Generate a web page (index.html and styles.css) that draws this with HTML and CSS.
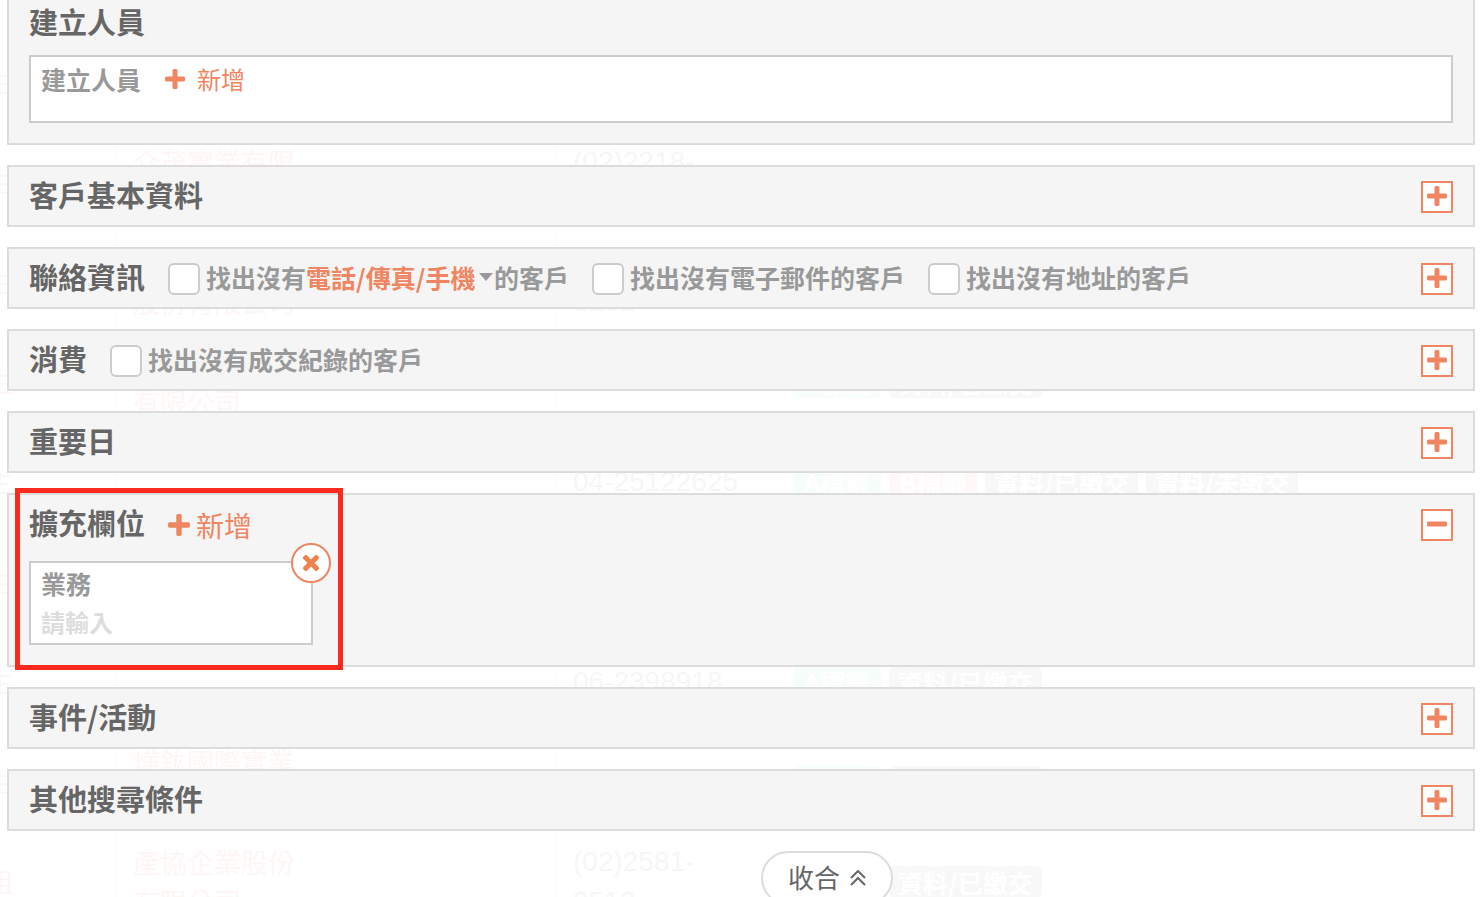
FILE: index.html
```
<!DOCTYPE html>
<html lang="zh-Hant">
  <head>
    <meta charset="UTF-8" />
    <meta name="viewport" content="width=device-width, initial-scale=1.0" />
    <title>客戶搜尋</title>
    <link rel="stylesheet" href="styles.css">
  </head>
  <body>
    <svg class="sprite" aria-hidden="true">
      <symbol id="plus" viewBox="0 0 20 20">
        <path d="M9 0h2a1.500 1.500 0 0 1 1.500 1.500v6h6A1.500 1.500 0 0 1 20 9v2a1.500 1.500 0 0 1-1.500 1.500h-6v6A1.500 1.500 0 0 1 11 20H9a1.500 1.500 0 0 1-1.500-1.500v-6h-6A1.500 1.500 0 0 1 0 11V9a1.500 1.500 0 0 1 1.500-1.500h6v-6A1.500 1.500 0 0 1 9 0z" />
      </symbol>
      <symbol id="minus" viewBox="0 0 20 20">
        <rect x="0" y="7.500" width="20" height="5" rx="1.500" />
      </symbol>
    </svg>

    <!-- customer list, dimmed behind the search form -->
    <div class="backdrop" aria-hidden="true">
      <table class="customers">
        <tbody>
          <tr><td>先生</td><td></td><td></td><td></td><td></td></tr>
          <tr><td>先生</td><td>介茂實業有限<br>公司</td><td></td><td>(02)2218-<br>3320</td><td></td></tr>
          <tr><td>先生</td><td>優勢國際<br>股份有限公司</td><td></td><td>(02)2581-<br>3262</td><td></td></tr>
          <tr><td>先生</td><td>大同實業<br>有限公司</td><td></td><td></td><td><span class="tag green">A標籤</span><span class="tag">資料/已繳交</span></td></tr>
          <tr><td>先生</td><td></td><td></td><td>04-25122625</td><td><span class="tag green">A標籤</span><span class="tag orange">B標籤</span><span class="tag">資料/已繳交</span><span class="tag">資料/未繳交</span></td></tr>
          <tr><td>先生</td><td></td><td></td><td></td><td></td></tr>
          <tr><td>先生</td><td></td><td></td><td>06-2398918</td><td><span class="tag green">A標籤</span><span class="tag">資料/已繳交</span></td></tr>
          <tr><td>先生</td><td>燁鈜國際實業<br>有限公司</td><td></td><td></td><td><span class="tag green">A標籤</span><span class="tag">資料/已繳交</span></td></tr>
          <tr><td>小姐</td><td>產協企業股份<br>有限公司</td><td></td><td>(02)2581-<br>3513</td><td><span class="tag green">A標籤</span><span class="tag">資料/已繳交</span></td></tr>
        </tbody>
      </table>
    </div>

    <main class="search">
      <section class="panel panel-first">
        <div class="panel-head">
          <h2>建立人員</h2>
        </div>
        <div class="box creator">
          <span class="box-label">建立人員</span>
          <button class="add" type="button"><svg><use href="#plus" /></svg>新增</button>
        </div>
      </section>

      <section class="panel">
        <div class="panel-head">
          <h2>客戶基本資料</h2>
          <button class="toggle" type="button" aria-label="展開"><svg><use href="#plus" /></svg></button>
        </div>
      </section>

      <section class="panel">
        <div class="panel-head">
          <h2>聯絡資訊</h2>
          <div class="check">
            <input type="checkbox" id="noPhone" />
            <label for="noPhone">找出沒有</label>
            <div class="select">
              <select id="phoneType" aria-label="聯絡方式">
                <option>電話/傳真/手機</option>
                <option>電話</option>
                <option>傳真</option>
                <option>手機</option>
              </select>
            </div>
            <label for="noPhone">的客戶</label>
          </div>
          <div class="check">
            <input type="checkbox" id="noMail" />
            <label for="noMail">找出沒有電子郵件的客戶</label>
          </div>
          <div class="check">
            <input type="checkbox" id="noAddress" />
            <label for="noAddress">找出沒有地址的客戶</label>
          </div>
          <button class="toggle" type="button" aria-label="展開"><svg><use href="#plus" /></svg></button>
        </div>
      </section>

      <section class="panel">
        <div class="panel-head">
          <h2>消費</h2>
          <div class="check">
            <input type="checkbox" id="noDeal" />
            <label for="noDeal">找出沒有成交紀錄的客戶</label>
          </div>
          <button class="toggle" type="button" aria-label="展開"><svg><use href="#plus" /></svg></button>
        </div>
      </section>

      <section class="panel">
        <div class="panel-head">
          <h2>重要日</h2>
          <button class="toggle" type="button" aria-label="展開"><svg><use href="#plus" /></svg></button>
        </div>
      </section>

      <section class="panel panel-open">
        <div class="panel-head">
          <h2>擴充欄位</h2>
          <button class="add add-large" type="button"><svg><use href="#plus" /></svg>新增</button>
          <button class="toggle" type="button" aria-label="收合"><svg><use href="#minus" /></svg></button>
        </div>
        <div class="box field">
          <label class="box-label" for="sales">業務</label>
          <input type="text" id="sales" placeholder="請輸入" />
          <button class="remove" type="button" aria-label="移除"><svg><use href="#plus" /></svg></button>
        </div>
        <div class="highlight"></div>
      </section>

      <section class="panel">
        <div class="panel-head">
          <h2>事件/活動</h2>
          <button class="toggle" type="button" aria-label="展開"><svg><use href="#plus" /></svg></button>
        </div>
      </section>

      <section class="panel">
        <div class="panel-head">
          <h2>其他搜尋條件</h2>
          <button class="toggle" type="button" aria-label="展開"><svg><use href="#plus" /></svg></button>
        </div>
      </section>

      <div class="actions">
        <button class="collapse" type="button">
          收合
          <svg viewBox="0 0 16 16"><path d="M1 8l7-7 7 7M1 15l7-7 7 7" /></svg>
        </button>
      </div>
    </main>
  </body>
</html>
```
FILE: styles.css
```
* {
  box-sizing: border-box;
}
body {
  position: relative;
  margin: 0;
  height: 100vh;
  overflow: hidden;
  background: #fff;
  color: #666;
  font-family: "Noto Sans CJK TC", sans-serif;
}
button,
input,
select {
  font-family: inherit;
  margin: 0;
}
button {
  padding: 0;
  cursor: pointer;
}
.sprite {
  display: none;
}

/* customer list */
.backdrop {
  position: absolute;
  top: 0;
  left: 0;
  right: 0;
  bottom: 0;
  overflow: hidden;
  opacity: 0.05;
}
.customers {
  table-layout: fixed;
  width: 1600px;
  margin: 32px 0 0 -105px;
  border-collapse: collapse;
}
.customers tr {
  height: 100px;
}
.customers td {
  padding: 0 16px;
  border-left: 2px solid #ddd;
  color: #e9604a;
  font-size: 27px;
  line-height: 40px;
}
.customers td:nth-child(-n + 4) {
  width: 220px;
}
.customers td:first-child {
  padding-right: 102px;
  text-align: right;
}
.customers td:nth-child(4) {
  color: #666;
  font-family: "Liberation Sans", sans-serif;
  font-size: 28px;
}
.tag {
  display: inline-block;
  min-width: 88px;
  margin-right: 8px;
  padding: 0 9px;
  border-radius: 6px;
  background: #888;
  color: #fff;
  font-size: 25px;
  font-weight: bold;
  line-height: 32px;
  text-align: center;
}
.tag.green {
  background: #6fdcbc;
}
.tag.orange {
  background: #f5a080;
}

/* search form */
.search {
  position: relative;
  padding: 0 8px 0 7px;
}
.panel {
  position: relative;
  margin-bottom: 20px;
  padding: 0 20px;
  border: 2px solid #dcdcdc;
  background: #f5f5f5;
}
.panel-head {
  display: flex;
  align-items: center;
  gap: 23px;
  height: 58px;
  padding-top: 2px;
}
.panel-first {
  padding-bottom: 20px;
  border-top: 0;
}
.panel-first .panel-head {
  height: 46px;
  margin-bottom: 9px;
}
.panel-open {
  padding-bottom: 20px;
}
.panel-open .panel-head {
  margin-bottom: 8px;
}
h2 {
  margin: 0;
  padding-bottom: 6px;
  font-size: 29px;
  font-weight: bold;
  line-height: 40px;
}
.toggle {
  display: flex;
  justify-content: center;
  width: 32px;
  height: 32px;
  margin-left: auto;
  padding-top: 3px;
  border: 2px solid #f08562;
  background: #fff;
}
.toggle svg {
  width: 20px;
  height: 20px;
  fill: #f08562;
}

.check {
  display: flex;
  align-items: center;
  color: #999;
  font-size: 25px;
  font-weight: bold;
  line-height: 32px;
}
.check label {
  padding-bottom: 4px;
}
.check input {
  appearance: none;
  width: 32px;
  height: 32px;
  margin-right: 6px;
  border: 2px solid #ccc;
  border-radius: 6px;
  background: #fff;
}
.select {
  position: relative;
}
.select select {
  appearance: none;
  display: block;
  width: 188px;
  height: 40px;
  padding: 0 0 6px;
  border: 0;
  background: none;
  color: #f08562;
  font-size: 25px;
  font-weight: bold;
}
/* drop-down arrow */
.select::after {
  content: "";
  position: absolute;
  top: 14px;
  right: 1px;
  border: 7px solid transparent;
  border-top: 8px solid #999;
  border-bottom: 0;
  pointer-events: none;
}

.box {
  position: relative;
  border: 2px solid #ccc;
  background: #fff;
}
.box-label {
  color: #999;
  font-size: 25px;
  font-weight: bold;
  line-height: 32px;
}
.creator {
  display: flex;
  align-items: flex-start;
  gap: 24px;
  height: 68px;
  padding: 6px 10px;
}
.add {
  display: flex;
  align-items: center;
  gap: 12px;
  border: 0;
  background: none;
  color: #f08562;
  font-size: 24px;
  line-height: 32px;
}
.add svg {
  width: 20px;
  height: 20px;
  fill: currentColor;
}
.add-large {
  gap: 6px;
  font-size: 28px;
}
.add-large svg {
  width: 22px;
  height: 22px;
}
.field {
  display: flex;
  flex-direction: column;
  width: 284px;
  height: 84px;
  padding: 4px 10px 0;
}
.field input {
  width: 100%;
  height: 44px;
  padding: 0;
  border: 0;
  outline: 0;
  background: none;
  color: #666;
  font-size: 24px;
  font-weight: bold;
}
.field input::placeholder {
  color: #ddd;
}
.remove {
  position: absolute;
  top: -20px;
  right: -20px;
  display: flex;
  align-items: center;
  justify-content: center;
  width: 40px;
  height: 40px;
  border: 2px solid #f08562;
  border-radius: 50%;
  background: #fff;
}
.remove svg {
  width: 20px;
  height: 20px;
  fill: #f0824f;
  transform: rotate(45deg);
}
/* red frame round the new field */
.highlight {
  position: absolute;
  top: -7px;
  left: 6px;
  width: 328px;
  height: 182px;
  border: 5px solid #fb2a1e;
  pointer-events: none;
}

.actions {
  display: flex;
  justify-content: center;
  padding-left: 172px;
}
.collapse {
  display: flex;
  align-items: center;
  justify-content: center;
  gap: 10px;
  width: 132px;
  height: 54px;
  padding-bottom: 4px;
  border: 2px solid #dcdcdc;
  border-radius: 27px;
  background: #fff;
  color: #666;
  font-size: 26px;
}
.collapse svg {
  width: 16px;
  height: 16px;
  margin-top: 4px;
  fill: none;
  stroke: #666;
  stroke-width: 2;
}
```
